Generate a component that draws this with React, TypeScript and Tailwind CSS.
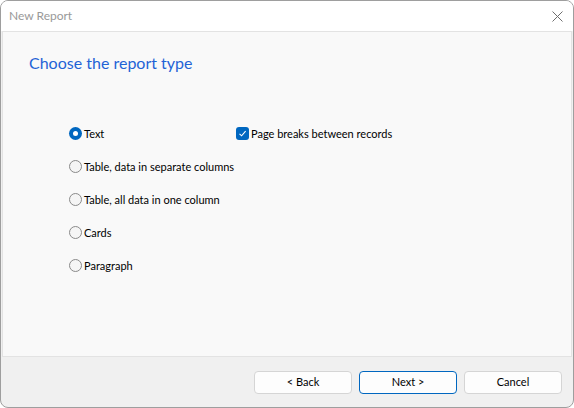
import React from "react";

function Radio({ checked, label }: { checked?: boolean; label: string }) {
  return (
    <div className="flex items-center h-[13px] whitespace-nowrap">
      {checked ? (
        <div className="w-[13px] h-[13px] rounded-full bg-[#0067c0] flex items-center justify-center shrink-0">
          <div className="w-[5px] h-[5px] rounded-full bg-white" />
        </div>
      ) : (
        <div className="w-[13px] h-[13px] rounded-full border border-[#8a8a8a] bg-[#f5f5f5] shrink-0" />
      )}
      <span className="ml-[2px] text-[11px] leading-none text-black">{label}</span>
    </div>
  );
}

function Btn({ label, primary }: { label: string; primary?: boolean }) {
  return (
    <div
      className={
        "w-[98px] h-[23px] rounded-[4px] bg-[#fdfdfd] flex items-center justify-center text-[11px] text-black " +
        (primary ? "border border-[#0067c0]" : "border border-[#d5d5d5]")
      }
    >
      {label}
    </div>
  );
}

export default function App() {
  return (
    <div
      className="w-[574px] h-[408px] bg-white"
      style={{ fontFamily: 'Lato, "Noto Sans", "Liberation Sans", sans-serif' }}
    >
      <div className="w-[574px] h-[408px] rounded-[8px] border border-[#9e9e9e] bg-[#f0f0f0] overflow-hidden flex flex-col">
        <div className="h-[30px] bg-white flex items-center justify-between pl-[8px] pr-[10px]">
          <span className="text-[12px] text-[#999999]">New Report</span>
          <svg width="11" height="11" viewBox="0 0 11 11">
            <path d="M0.5 0.5 L10.5 10.5 M10.5 0.5 L0.5 10.5" stroke="#6e6e6e" strokeWidth="1" fill="none" />
          </svg>
        </div>
        <div className="mx-[1px] h-[326px] bg-[#f9f9f9] border border-[#e3e3e3] flex flex-col">
          <div className="pl-[26px] pt-[20px] text-[16px] leading-[22px] text-[#1f63d6]">Choose the report type</div>
          <div className="pl-[66px] pt-[53px] flex">
            <div className="flex flex-col gap-[20px] w-[167px]">
              <Radio checked label="Text" />
              <Radio label="Table, data in separate columns" />
              <Radio label="Table, all data in one column" />
              <Radio label="Cards" />
              <Radio label="Paragraph" />
            </div>
            <div className="flex items-center h-[13px] whitespace-nowrap">
              <div className="w-[13px] h-[13px] rounded-[3px] bg-[#0067c0] flex items-center justify-center shrink-0">
                <svg width="9" height="9" viewBox="0 0 9 9">
                  <path d="M1.5 4.8 L3.6 6.8 L7.6 2.2" stroke="white" strokeWidth="1.1" fill="none" />
                </svg>
              </div>
              <span className="ml-[2px] text-[11px] leading-none text-black">Page breaks between records</span>
            </div>
          </div>
        </div>
        <div className="flex justify-end gap-[7px] pr-[11px] pt-[14px]">
          <Btn label="< Back" />
          <Btn label="Next >" primary />
          <Btn label="Cancel" />
        </div>
      </div>
    </div>
  );
}
